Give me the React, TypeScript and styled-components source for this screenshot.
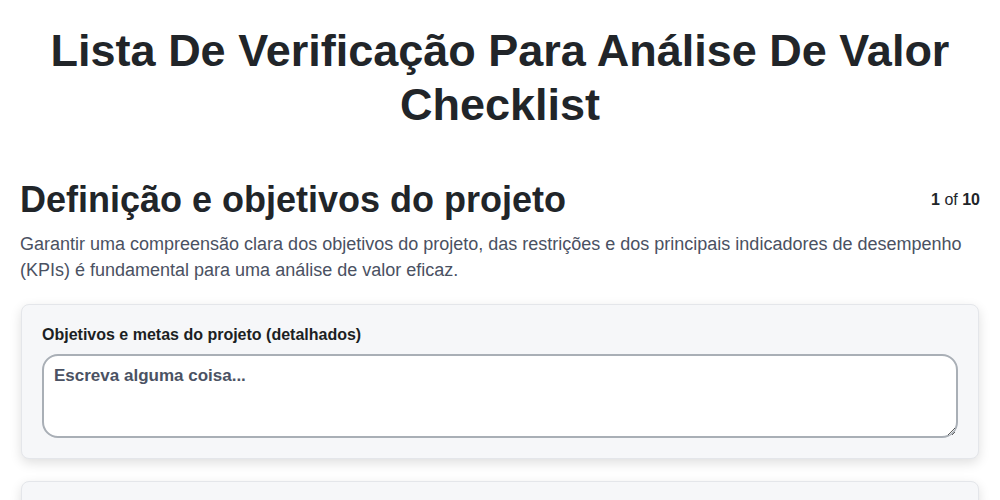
import React from "react";
import styled, { createGlobalStyle } from "styled-components";

const Global = createGlobalStyle`
  body {
    margin: 0;
    background: #ffffff;
    font-family: "Liberation Sans", Arial, sans-serif;
    color: #212529;
  }
  * { box-sizing: border-box; }
`;

const Page = styled.div`
  padding: 24px 20px 40px;
`;

const Title = styled.h1`
  margin: 0 0 46px;
  text-align: center;
  font-size: 45px;
  line-height: 1.2;
  font-weight: 700;
  color: #212529;
`;

const SectionHead = styled.div`
  display: flex;
  justify-content: space-between;
  align-items: flex-start;
`;

const SectionTitle = styled.h2`
  margin: 0;
  font-size: 36px;
  line-height: 1.2;
  font-weight: 700;
  color: #212529;
`;

const Counter = styled.div`
  font-size: 16px;
  line-height: 20px;
  margin-top: 12px;
  color: #212529;
  b { font-weight: 700; }
`;

const Description = styled.p`
  margin: 10px 0 21px;
  font-size: 18px;
  line-height: 26px;
  color: #4a5162;
`;

const Card = styled.div`
  background: #f6f7f9;
  border: 1px solid #e4e6ea;
  border-radius: 8px;
  box-shadow: 0 4px 12px rgba(0, 0, 0, 0.13);
  padding: 20px;
  margin: 0 1px 22px;
`;

const Label = styled.label`
  display: block;
  font-size: 16px;
  line-height: 20px;
  font-weight: 700;
  color: #1c1f23;
  margin-bottom: 9px;
`;

const TextArea = styled.textarea`
  display: block;
  width: 100%;
  height: 84px;
  padding: 10px;
  border: 2px solid #a9afb6;
  border-radius: 16px;
  background: #ffffff;
  font-family: "Liberation Sans", Arial, sans-serif;
  font-size: 17px;
  line-height: 20px;
  resize: vertical;
  outline: none;
  &::placeholder {
    color: #4b5263;
    font-weight: 700;
    opacity: 1;
  }
`;

export default function App() {
  return (
    <>
      <Global />
      <Page>
        <Title>
          Lista De Verificação Para Análise De Valor
          <br />
          Checklist
        </Title>
        <SectionHead>
          <SectionTitle>Definição e objetivos do projeto</SectionTitle>
          <Counter>
            <b>1</b> of <b>10</b>
          </Counter>
        </SectionHead>
        <Description>
          Garantir uma compreensão clara dos objetivos do projeto, das restrições e dos principais
          indicadores de desempenho (KPIs) é fundamental para uma análise de valor eficaz.
        </Description>
        <Card>
          <Label>Objetivos e metas do projeto (detalhados)</Label>
          <TextArea placeholder="Escreva alguma coisa..." />
        </Card>
        <Card>
          <Label>Restrições e limitações do projeto</Label>
          <TextArea placeholder="Escreva alguma coisa..." />
        </Card>
      </Page>
    </>
  );
}
